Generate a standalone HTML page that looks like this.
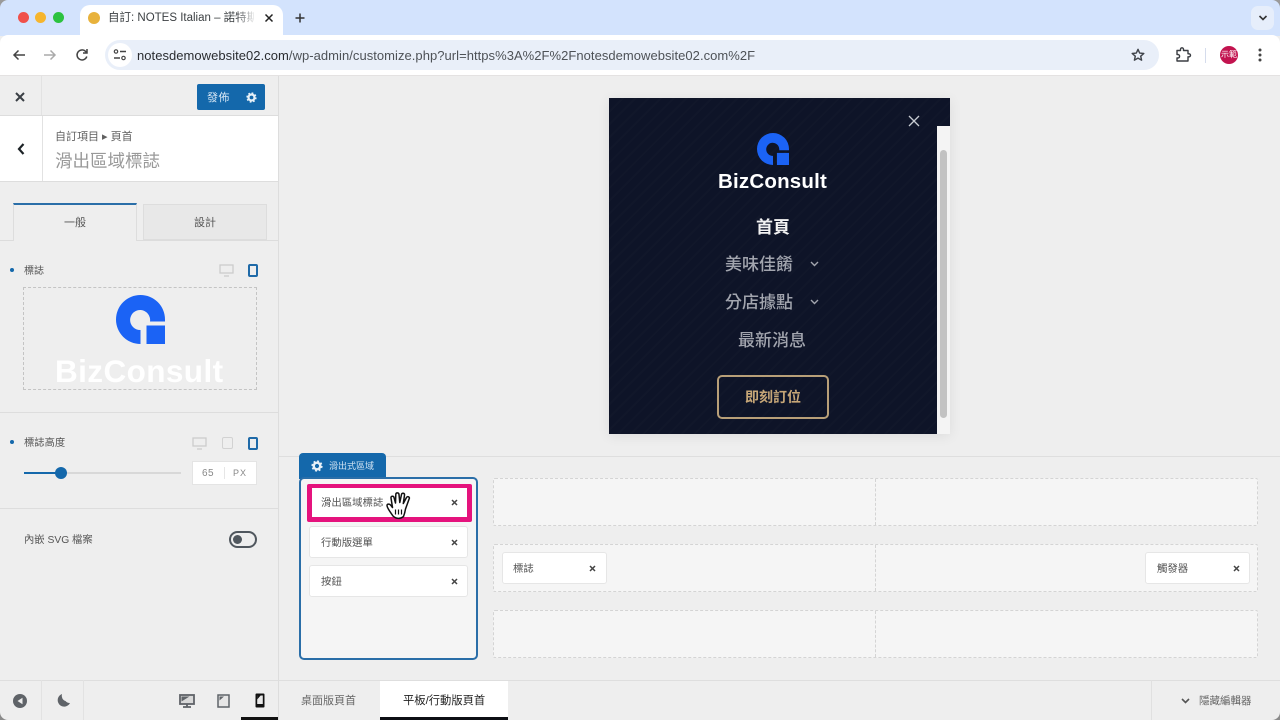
<!DOCTYPE html>
<html><head><meta charset="utf-8"><style>
*{box-sizing:border-box;margin:0;padding:0}
html,body{width:1280px;height:720px;overflow:hidden;background:#eee}
body{position:relative;font-family:"Liberation Sans","Noto Sans CJK TC",sans-serif;color:#50575e}
.a{position:absolute}
.t{position:absolute;white-space:nowrap;line-height:1}
svg{position:absolute;overflow:visible}
.chip{position:absolute;background:#fff;border:1px solid #e6e6e6;border-radius:3px;height:32px}
.chip span{position:absolute;left:11px;top:10px;font-size:10.4px;line-height:13px;color:#555;white-space:nowrap}
.drop{position:absolute;background:#f5f5f5;border:1px dashed #d4d4d4;border-radius:2px;height:48px;width:765px;left:493px}
.drop:after{content:"";position:absolute;left:381px;top:0;bottom:0;border-left:1px dashed #d4d4d4}
</style></head><body>

<!-- Browser chrome -->
<div class="a" style="left:0;top:0;width:1280px;height:36px;background:#d3e3fd"></div>
<div class="a" style="left:18px;top:12px;width:11px;height:11px;border-radius:50%;background:#f0504a"></div>
<div class="a" style="left:35px;top:12px;width:11px;height:11px;border-radius:50%;background:#f6b52d"></div>
<div class="a" style="left:53px;top:12px;width:11px;height:11px;border-radius:50%;background:#2cc23f"></div>
<div class="a" style="left:80px;top:5px;width:203px;height:31px;background:#fff;border-radius:10px 10px 0 0"></div>
<div class="a" style="left:88px;top:12px;width:12px;height:12px;border-radius:50%;background:#e8b23c"></div>
<div class="t" style="left:108px;top:11px;font-size:11.5px;color:#3c4043;width:146px;overflow:hidden;line-height:14px">自訂: NOTES Italian – 諾特斯義</div>
<div class="a" style="left:236px;top:8px;width:20px;height:22px;background:linear-gradient(90deg,rgba(255,255,255,0),#fff)"></div>
<svg style="left:264px;top:13px" width="10" height="10"><path d="M1.500 1.500l7 7M8.500 1.500l-7 7" stroke="#222" stroke-width="1.500"/></svg>
<svg style="left:295px;top:13px" width="10" height="10"><path d="M5 .5v9M.5 5h9" stroke="#333" stroke-width="1.500"/></svg>
<div class="a" style="left:1251px;top:6px;width:23px;height:24px;background:#e6eefb;border-radius:7px"></div>
<svg style="left:1258px;top:15px" width="10" height="6"><path d="M1.500 1l3.500 3.500L8.500 1" stroke="#333" stroke-width="1.600" fill="none"/></svg>

<div class="a" style="left:0;top:35px;width:1280px;height:41px;background:#fff;border-bottom:1px solid #e4e2e2;border-radius:8px 8px 0 0"></div>
<svg style="left:12px;top:49px" width="14" height="12"><path d="M13 6H2M6.500 1.500L2 6l4.500 4.500" stroke="#444" stroke-width="1.500" fill="none"/></svg>
<svg style="left:43px;top:49px" width="14" height="12"><path d="M1 6h11M7.500 1.500L12 6l-4.500 4.500" stroke="#aaa" stroke-width="1.500" fill="none"/></svg>
<svg style="left:75px;top:48px" width="14" height="14"><path d="M11.800 8.500A5 5 0 1 1 10.500 3.300L12 4.800M12 1v4H8" stroke="#444" stroke-width="1.500" fill="none"/></svg>
<div class="a" style="left:105px;top:40px;width:1054px;height:30px;background:#e9eff9;border-radius:15px"></div>
<div class="a" style="left:108px;top:43px;width:24px;height:24px;background:#fff;border-radius:50%"></div>
<svg style="left:113px;top:49px" width="14" height="12"><circle cx="3" cy="2.500" r="1.700" fill="none" stroke="#444" stroke-width="1.200"/><path d="M7 2.500h6M1 9h6" stroke="#444" stroke-width="1.400"/><circle cx="10.500" cy="9" r="1.700" fill="none" stroke="#444" stroke-width="1.200"/></svg>
<div class="t" style="left:137px;top:48px;font-size:13px;line-height:15px;color:#2a2c30;letter-spacing:.04px">notesdemowebsite02.com<span style="color:#4e5257">/wp-admin/customize.php?url=https%3A%2F%2Fnotesdemowebsite02.com%2F</span></div>
<svg style="left:1131px;top:48px" width="14" height="14"><path d="M7 1.300l1.700 3.800 4.100.4-3.100 2.700.9 4L7 10.100l-3.600 2.100.9-4L1.200 5.500l4.100-.4z" fill="none" stroke="#3f434a" stroke-width="1.400" stroke-linejoin="round"/></svg>
<svg style="left:1175px;top:47px" width="16" height="16"><path d="M2 3.500h3.500V2.300a1.500 1.500 0 0 1 3 0v1.200H13v3.300h1a1.500 1.500 0 0 1 0 3h-1V14H2v-3h1.200a1.800 1.800 0 0 0 0-3.500H2z" fill="none" stroke="#3a3d42" stroke-width="1.400" stroke-linejoin="round"/></svg>
<div class="a" style="left:1205px;top:48px;width:1px;height:15px;background:#d5dcec"></div>
<div class="a" style="left:1220px;top:46px;width:18px;height:18px;border-radius:50%;background:#c2134f;color:#fff;font-size:8px;line-height:18px;text-align:center">示範</div>
<svg style="left:1258px;top:48px" width="4" height="14"><circle cx="2" cy="2" r="1.500" fill="#444"/><circle cx="2" cy="7" r="1.500" fill="#444"/><circle cx="2" cy="12" r="1.500" fill="#444"/></svg>

<!-- Sidebar -->
<div class="a" style="left:0;top:76px;width:279px;height:644px;background:#eee;border-right:1px solid #ddd"></div>
<div class="a" style="left:41px;top:76px;width:1px;height:40px;background:#e2e2e2"></div>
<div class="a" style="left:0;top:115px;width:279px;height:1px;background:#ddd"></div>
<svg style="left:15px;top:92px" width="10" height="10"><path d="M1 1l8 8M9 1l-8 8" stroke="#3a3f45" stroke-width="2"/></svg>
<div class="a" style="left:197px;top:84px;width:68px;height:26px;background:#1468ab;border-radius:2px"></div>
<div class="t" style="left:207px;top:92px;font-size:11px;line-height:13px;color:#d5e6f4;letter-spacing:.5px">發佈</div>
<svg style="left:246px;top:92px" width="11" height="11" viewBox="0 0 11 11"><circle cx="5.500" cy="5.500" r="3" fill="none" stroke="#e8f1f8" stroke-width="2.200"/><circle cx="5.500" cy="5.500" r="4.400" fill="none" stroke="#e8f1f8" stroke-width="1.500" stroke-dasharray="1.800 1.650"/></svg>

<div class="a" style="left:0;top:116px;width:278px;height:66px;background:#fff;border-bottom:1px solid #ddd"></div>
<div class="a" style="left:42px;top:116px;width:1px;height:65px;background:#e2e2e2"></div>
<svg style="left:17px;top:143px" width="8" height="12"><path d="M6.500 1L2 6l4.500 5" fill="none" stroke="#1d2327" stroke-width="2.200"/></svg>
<div class="t" style="left:55px;top:131px;font-size:11px;line-height:13px;color:#606060">自訂項目 ▸ 頁首</div>
<div class="t" style="left:55px;top:151px;font-size:17.500px;line-height:20px;color:#999">滑出區域標誌</div>

<div class="a" style="left:0;top:240px;width:278px;height:1px;background:#dcdcdc"></div>
<div class="a" style="left:13px;top:203px;width:124px;height:38px;background:#eee;border:1px solid #ddd;border-top:2px solid #2a6ea8;border-bottom:0"></div>
<div class="t" style="left:64px;top:217px;font-size:11px;line-height:13px;color:#555">一般</div>
<div class="a" style="left:143px;top:204px;width:124px;height:36px;background:#e8e8e8;border:1px solid #ddd"></div>
<div class="t" style="left:194px;top:217px;font-size:11px;line-height:13px;color:#555">設計</div>

<div class="a" style="left:10px;top:268px;width:4px;height:4px;border-radius:50%;background:#1468ab"></div>
<div class="t" style="left:24px;top:265px;font-size:10px;line-height:13px;color:#555">標誌</div>
<svg style="left:219px;top:264px" width="15" height="13"><path d="M1 1h13v8H1zM5 12h5" fill="none" stroke="#ccc" stroke-width="1.300"/></svg>
<div class="a" style="left:248px;top:264px;width:10px;height:13px;border:2px solid #1f6aa8;border-radius:2px"></div>

<div class="a" style="left:23px;top:287px;width:234px;height:103px;border:1px dashed #c4c4c4"></div>
<svg style="left:116px;top:295px" width="49" height="49" viewBox="0 0 49 49"><path d="M24.500 0A24.500 24.500 0 0 1 49 24.500V26.500H34A10 10 0 1 0 24.500 35V49A24.500 24.500 0 0 1 24.500 0z" fill="#1b63f5"/><rect x="30.500" y="30.500" width="18.500" height="18.500" fill="#1b63f5"/></svg>
<div class="t" style="left:55px;top:354px;font-size:31.500px;line-height:34px;font-weight:700;color:#fff;letter-spacing:.4px">BizConsult</div>

<div class="a" style="left:0;top:412px;width:278px;height:1px;background:#ddd"></div>
<div class="a" style="left:10px;top:440px;width:4px;height:4px;border-radius:50%;background:#1468ab"></div>
<div class="t" style="left:24px;top:437px;font-size:10.300px;line-height:13px;color:#555">標誌高度</div>
<svg style="left:192px;top:437px" width="15" height="13"><path d="M1 1h13v8H1zM5 12h5" fill="none" stroke="#ccc" stroke-width="1.300"/></svg>
<div class="a" style="left:222px;top:437px;width:11px;height:12px;border:1.500px solid #d2d2d2;border-radius:2px"></div>
<div class="a" style="left:248px;top:437px;width:10px;height:13px;border:2px solid #1f6aa8;border-radius:2px"></div>
<div class="a" style="left:24px;top:472px;width:157px;height:2px;background:#d8d8d8"></div>
<div class="a" style="left:24px;top:472px;width:37px;height:2px;background:#1468ab"></div>
<div class="a" style="left:55px;top:467px;width:12px;height:12px;border-radius:50%;background:#1468ab"></div>
<div class="a" style="left:192px;top:461px;width:65px;height:24px;background:#fff;border:1px solid #e4e4e4"></div>
<div class="a" style="left:224px;top:467px;width:1px;height:12px;background:#e6e6e6"></div>
<div class="t" style="left:202px;top:468px;font-size:10px;line-height:12px;color:#888;letter-spacing:.4px">65</div>
<div class="t" style="left:233px;top:468px;font-size:9px;line-height:11px;color:#888;letter-spacing:1px">PX</div>

<div class="a" style="left:0;top:508px;width:278px;height:1px;background:#ddd"></div>
<div class="t" style="left:24px;top:534px;font-size:10.300px;line-height:13px;color:#555">內嵌 SVG 檔案</div>
<div class="a" style="left:229px;top:531px;width:28px;height:17px;border:2px solid #50575e;border-radius:9px"></div>
<div class="a" style="left:233px;top:535px;width:9px;height:9px;border-radius:50%;background:#50575e"></div>

<!-- Bottom sidebar footer -->
<div class="a" style="left:0;top:680px;width:1280px;height:1px;background:#dedede"></div>
<div class="a" style="left:41px;top:680px;width:1px;height:40px;background:#e2e2e2"></div>
<div class="a" style="left:83px;top:680px;width:1px;height:40px;background:#e2e2e2"></div>
<svg style="left:13px;top:694px" width="14" height="14"><circle cx="7" cy="7" r="7" fill="#5f6368"/><path d="M9.500 3.800v6.400L4.500 7z" fill="#eee"/></svg>
<svg style="left:56px;top:694px" width="14" height="13"><path d="M6 0A6.500 6.500 0 1 0 14 9 5.500 5.500 0 0 1 9.500 7 5.500 5.500 0 0 1 6 0z" fill="#5f6368"/></svg>
<svg style="left:179px;top:694px" width="16" height="14"><rect x="1" y="1" width="14" height="9" fill="#d9d9d9" stroke="#5f6368" stroke-width="1.800"/><path d="M8 10v3M4 13h8" fill="none" stroke="#5f6368" stroke-width="1.800"/><path d="M2.500 7.500l8-5h-8z" fill="#5f6368"/></svg>
<svg style="left:217px;top:694px" width="13" height="14"><rect x="1" y="1" width="11" height="12" fill="#e6e6e6" stroke="#5f6368" stroke-width="1.500"/><path d="M2.500 6.500V2.500H7z" fill="#5f6368"/></svg>
<svg style="left:255px;top:693px" width="10" height="15"><rect x=".5" y=".5" width="9" height="14" rx="1" fill="#111"/><rect x="2.200" y="2.500" width="5.600" height="8.500" fill="#e8e8e8"/><path d="M2.200 6.500v-4h3.400z" fill="#111"/></svg>
<div class="a" style="left:241px;top:717px;width:37px;height:3px;background:#111"></div>
<div class="t" style="left:301px;top:695px;font-size:11px;line-height:13px;color:#666">桌面版頁首</div>
<div class="a" style="left:380px;top:681px;width:128px;height:39px;background:#fff;border-bottom:3px solid #0d0f14"></div>
<div class="t" style="left:403px;top:695px;font-size:11.300px;line-height:13px;color:#222">平板/行動版頁首</div>
<div class="a" style="left:1151px;top:680px;width:1px;height:40px;background:#e0e0e0"></div>
<svg style="left:1181px;top:698px" width="9" height="6"><path d="M1 1l3.500 3.500L8 1" fill="none" stroke="#555" stroke-width="1.600"/></svg>
<div class="t" style="left:1199px;top:695px;font-size:10.500px;line-height:13px;color:#666">隱藏編輯器</div>

<!-- Preview -->
<div class="a" style="left:279px;top:456px;width:1001px;height:1px;background:#dedede"></div>
<div class="a" style="left:609px;top:98px;width:341px;height:336px;background:#0e1428;box-shadow:0 2px 12px rgba(0,0,0,.08);overflow:hidden">
  <div class="a" style="inset:0;background:repeating-linear-gradient(135deg,rgba(255,255,255,.012) 0 2px,transparent 2px 9px)"></div>
  <div class="a" style="left:328px;top:28px;width:13px;height:308px;background:#f4f4f4"></div>
  <div class="a" style="left:331px;top:52px;width:7px;height:268px;background:#c2c2c2;border-radius:4px"></div>
</div>
<svg style="left:908px;top:115px" width="12" height="12"><path d="M1 1l10 10M11 1L1 11" stroke="#c8ccd2" stroke-width="1.300"/></svg>
<svg style="left:757px;top:133px" width="32" height="32" viewBox="0 0 49 49"><path d="M24.500 0A24.500 24.500 0 0 1 49 24.500V26.500H34A10 10 0 1 0 24.500 35V49A24.500 24.500 0 0 1 24.500 0z" fill="#1b63f5"/><rect x="30.500" y="30.500" width="18.500" height="18.500" fill="#1b63f5"/></svg>
<div class="t" style="left:718px;top:170px;font-size:20.500px;line-height:24px;font-weight:700;color:#fff;letter-spacing:.2px">BizConsult</div>
<div class="t" style="left:756px;top:218px;font-size:17px;line-height:20px;font-weight:700;color:#f2f2f2">首頁</div>
<div class="t" style="left:725px;top:255px;font-size:17px;line-height:20px;font-weight:500;color:#a2a5ae">美味佳餚</div>
<svg style="left:810px;top:261px" width="9" height="6"><path d="M1 1l3.500 3.500L8 1" fill="none" stroke="#a2a5ae" stroke-width="1.400"/></svg>
<div class="t" style="left:725px;top:293px;font-size:17px;line-height:20px;font-weight:500;color:#a2a5ae">分店據點</div>
<svg style="left:810px;top:299px" width="9" height="6"><path d="M1 1l3.500 3.500L8 1" fill="none" stroke="#a2a5ae" stroke-width="1.400"/></svg>
<div class="t" style="left:738px;top:331px;font-size:17px;line-height:20px;font-weight:500;color:#a2a5ae">最新消息</div>
<div class="a" style="left:717px;top:375px;width:112px;height:44px;border:2px solid #b89f78;border-radius:5px"></div>
<div class="t" style="left:745px;top:389px;font-size:14px;line-height:17px;font-weight:700;color:#c6a677">即刻訂位</div>

<!-- Off canvas column -->
<div class="a" style="left:299px;top:453px;width:87px;height:26px;background:#1468ab;border-radius:4px 4px 0 0"></div>
<svg style="left:311px;top:460px" width="12" height="12" viewBox="0 0 11 11"><circle cx="5.500" cy="5.500" r="3" fill="none" stroke="#e8f1f8" stroke-width="2.200"/><circle cx="5.500" cy="5.500" r="4.400" fill="none" stroke="#e8f1f8" stroke-width="1.500" stroke-dasharray="1.800 1.650"/></svg>
<div class="t" style="left:329px;top:461px;font-size:9px;line-height:11px;color:#cfe2f2">滑出式區域</div>
<div class="a" style="left:299px;top:477px;width:179px;height:183px;background:#f5f5f5;border:2px solid #2a6ea8;border-radius:5px"></div>

<div class="a" style="left:307px;top:484px;width:165px;height:38px;background:#e5137d;border-radius:2px"></div>
<div class="chip" style="left:312px;top:488px;width:155px;height:29px;border:0;border-radius:0"><span style="left:9px;top:9px">滑出區域標誌</span></div>
<div class="chip" style="left:309px;top:526px;width:159px"><span>行動版選單</span></div>
<div class="chip" style="left:309px;top:565px;width:159px"><span>按鈕</span></div>
<svg style="left:451px;top:499px" width="7" height="7"><path d="M1 1l5 5M6 1L1 6" stroke="#444" stroke-width="1.500"/></svg>
<svg style="left:451px;top:539px" width="7" height="7"><path d="M1 1l5 5M6 1L1 6" stroke="#444" stroke-width="1.500"/></svg>
<svg style="left:451px;top:578px" width="7" height="7"><path d="M1 1l5 5M6 1L1 6" stroke="#444" stroke-width="1.500"/></svg>

<svg style="left:386px;top:491px" width="28" height="30" viewBox="0 0 28 30"><path d="M7 25 C5 22 1 17 1 14.500 C1 12.800 3.500 12.500 5 14.500 L6.500 16.500 L5 7 C4.800 5 7.500 4.500 8 6.500 L9.500 12 L9.800 3.500 C9.800 1.300 12.800 1.300 13 3.500 L13.800 11.500 L15.500 3.500 C16 1.500 18.800 2 18.500 4.200 L17.300 12.500 L20.500 6.500 C21.500 4.800 24 5.800 23.200 7.800 L19.500 18 C19 21 18.500 23 17.500 25.500 C14.500 28 10 28 7 25z" fill="#fff" stroke="#111" stroke-width="1.500" stroke-linejoin="round"/><path d="M9.500 18.500v5M12.500 18.500v5M15.500 18.500v5" stroke="#111" stroke-width="1.200"/></svg>

<!-- Drop rows -->
<div class="drop" style="top:478px"></div>
<div class="drop" style="top:544px"></div>
<div class="drop" style="top:610px"></div>
<div class="chip" style="left:502px;top:552px;width:105px"><span style="left:10px">標誌</span></div>
<svg style="left:589px;top:565px" width="7" height="7"><path d="M1 1l5 5M6 1L1 6" stroke="#444" stroke-width="1.500"/></svg>
<div class="chip" style="left:1145px;top:552px;width:105px"><span>觸發器</span></div>
<svg style="left:1233px;top:565px" width="7" height="7"><path d="M1 1l5 5M6 1L1 6" stroke="#444" stroke-width="1.500"/></svg>

<!-- Window corners -->
<svg style="left:0;top:0" width="8" height="8"><path d="M0 0h8A8 8 0 0 0 0 8z" fill="#9a9a9a"/></svg>
<svg style="left:1272px;top:0" width="8" height="8"><path d="M8 0H0A8 8 0 0 1 8 8z" fill="#9a9a9a"/></svg>
<svg style="left:0;top:712px" width="8" height="8"><path d="M0 8h8A8 8 0 0 1 0 0z" fill="#8a8a8a"/></svg>
<svg style="left:1272px;top:712px" width="8" height="8"><path d="M8 8H0A8 8 0 0 0 8 0z" fill="#8a8a8a"/></svg>

</body></html>
